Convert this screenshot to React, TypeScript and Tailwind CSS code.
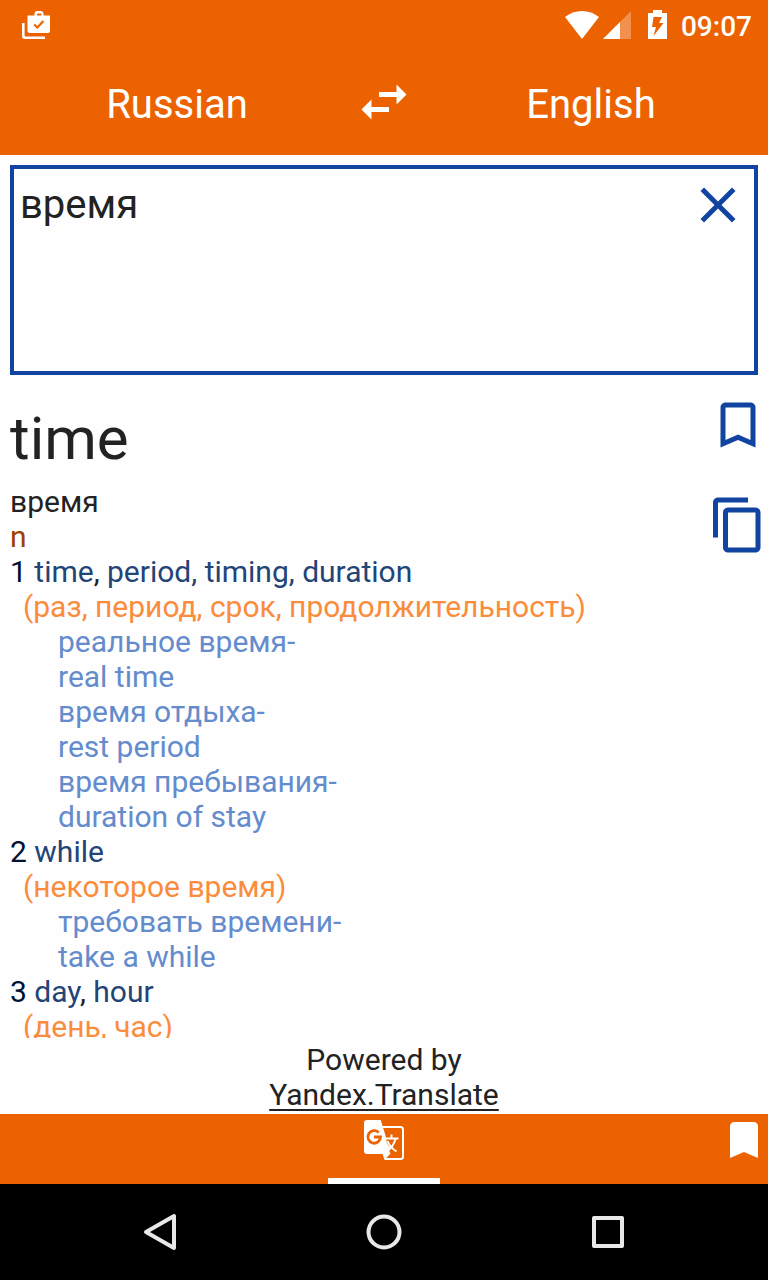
import { useState } from "react";
import type { ReactNode } from "react";
import {
  MdBookmark,
  MdBookmarkBorder,
  MdClose,
  MdContentCopy,
  MdSwapHoriz,
} from "react-icons/md";

type Term = { word: string; separator?: string; tinted?: boolean };
type Sense = { terms: Term[]; hint: string; examples: string[] };

const senses: Sense[] = [
  {
    terms: [
      { word: "time", separator: ", " },
      { word: "period", separator: ", ", tinted: true },
      { word: "timing", separator: ", ", tinted: true },
      { word: "duration" },
    ],
    hint: "(раз, период, срок, продолжительность)",
    examples: [
      "реальное время-",
      "real time",
      "время отдыха-",
      "rest period",
      "время пребывания-",
      "duration of stay",
    ],
  },
  {
    terms: [{ word: "while" }],
    hint: "(некоторое время)",
    examples: ["требовать времени-", "take a while"],
  },
  {
    terms: [{ word: "day", separator: ", " }, { word: "hour" }],
    hint: "(день, час)",
    examples: [],
  },
];

function StatusBar() {
  return (
    <div className="flex h-12 items-center justify-between pl-[22px] pr-4 pt-px">
      <svg width="28" height="28" viewBox="0 0 28 28" aria-hidden="true">
        <path
          fill="#fff"
          fillRule="evenodd"
          d="M12.500 4.500V3a3 3 0 0 1 3-3h3a3 3 0 0 1 3 3v1.500H28V20a2 2 0 0 1-2 2H7.500a2 2 0 0 1-2-2V4.500zM15 4.500h4.500v-1a1 1 0 0 0-1-1H16a1 1 0 0 0-1 1z"
        />
        <path d="M12.200 13.500l3.200 3 6-6.500" fill="none" stroke="#ec6200" strokeWidth="2.200" />
        <path d="M1.300 12v12.700a2 2 0 0 0 2 2H23" fill="none" stroke="#fff" strokeWidth="2.600" />
      </svg>
      <div className="flex items-center">
        <svg width="34" height="28" viewBox="0 0 34 28" aria-hidden="true">
          <path fill="#fff" d="M17 28L0 6Q7.500 0 17 0t17 6z" />
        </svg>
        <svg className="ml-1" width="28" height="28" viewBox="0 0 28 28" aria-hidden="true">
          <path fill="#fff" fillOpacity=".3" d="M0 28L28 0v28z" />
          <path fill="#fff" d="M0 28L17 11v17z" />
        </svg>
        <svg className="ml-[17px]" width="19" height="29" viewBox="0 0 19 29" aria-hidden="true">
          <path
            fill="#fff"
            fillRule="evenodd"
            d="M5 0h9v3h5v26H0V3h5zM5.500 7L4 17h4l-2.500 9L15.500 13h-4.500l3-6z"
          />
        </svg>
        <span className="ml-[14px] pt-1 text-[28px] font-medium leading-8 text-white">09:07</span>
      </div>
    </div>
  );
}

function TranslateIcon() {
  return (
    <svg width="40" height="40" viewBox="0 0 40 40" fill="none" aria-hidden="true">
      <path
        d="M18 7h18.500a2.500 2.500 0 0 1 2.500 2.500v27a2.500 2.500 0 0 1-2.500 2.500H21"
        stroke="#fff"
        strokeWidth="2"
      />
      <path
        fill="#fff"
        d="M3 0h13.700l4.800 15.500 1.500 8 3.500 4.500-2 1.500 2 4L20.500 40l-2-6H3a3 3 0 0 1-3-3V3a3 3 0 0 1 3-3z"
      />
      <path
        d="M14.600 12.400A6.300 6.300 0 1 0 16.500 17H10"
        stroke="#ec6200"
        strokeWidth="2.800"
      />
      <path
        d="M21 18.500h13.500M27.500 14.500v4M31.500 19c-1.300 5-4.500 9.500-9 12.500M23.500 21c1.800 4.500 5 8 9 10.500"
        stroke="#fff"
        strokeWidth="2"
      />
    </svg>
  );
}

function IconButton({ label, onClick, children }: { label: string; onClick?: () => void; children: ReactNode }) {
  return (
    <button type="button" aria-label={label} onClick={onClick} className="shrink-0 text-[#1144a0]">
      {children}
    </button>
  );
}

export default function App() {
  const [query, setQuery] = useState("время");
  const [saved, setSaved] = useState(false);

  return (
    <div className="flex h-screen flex-col bg-[#fefefe] font-[Roboto,sans-serif] text-[#222222]">
      <header className="shrink-0 bg-[#ec6200] text-white">
        <StatusBar />
        <div className="flex h-[107px] items-center text-[40px] leading-[48px]">
          <button type="button" className="flex-1 pt-[6px]">Russian</button>
          <button type="button" aria-label="Swap languages">
            <MdSwapHoriz size={60} />
          </button>
          <button type="button" className="flex-1 pt-[6px]">English</button>
        </div>
      </header>

      <div className="mx-[10px] mt-[10px] flex h-[210px] shrink-0 items-start border-4 border-[#1144a0] pr-[6px] pt-[6px]">
        <textarea
          aria-label="Text to translate"
          spellCheck={false}
          value={query}
          onChange={(e) => setQuery(e.target.value)}
          className="h-full min-w-0 flex-1 resize-none bg-transparent pl-[6px] pt-[6px] text-[40px] leading-[48px] outline-none"
        />
        <IconButton label="Clear text" onClick={() => setQuery("")}>
          <MdClose size={60} />
        </IconButton>
      </div>

      <main className="flex min-h-0 flex-1 items-start overflow-hidden pl-[10px] pt-5">
        <article className="h-full min-w-0 flex-1 overflow-hidden pt-2 text-[30px] leading-[35px]">
          <h1 className="mb-[9px] text-[60px] leading-[72px]">time</h1>
          <p>время</p>
          <p className="text-[#a04000]">n</p>
          <ol>
            {senses.map((sense, i) => (
              <li key={i}>
                <p>
                  <span className="text-[#001133]">{i + 1} </span>
                  {sense.terms.map((term) => (
                    <span key={term.word} className={term.tinted ? "text-[#224477]" : ""}>
                      <span className="text-[#224477]">{term.word}</span>
                      {term.separator}
                    </span>
                  ))}
                </p>
                <p className="pl-[13px] text-[#fa8c3c]">{sense.hint}</p>
                {sense.examples.map((example) => (
                  <p key={example} className="pl-12 text-[#648ccd]">{example}</p>
                ))}
              </li>
            ))}
          </ol>
        </article>
        <div className="flex shrink-0 flex-col gap-10">
          <IconButton label="Save translation" onClick={() => setSaved(!saved)}>
            {saved ? <MdBookmark size={60} /> : <MdBookmarkBorder size={60} />}
          </IconButton>
          <IconButton label="Copy translation">
            <MdContentCopy size={60} />
          </IconButton>
        </div>
      </main>

      <footer className="shrink-0">
        <p className="pb-[2px] pt-1 text-center text-[30px] leading-[35px]">
          Powered by
          <br />
          <a href="#yandex" className="underline decoration-2 underline-offset-4">Yandex.Translate</a>
        </p>
        <nav className="grid h-[70px] grid-cols-[1fr_112px_1fr] bg-[#ec6200] text-white" aria-label="Sections">
          <button
            type="button"
            aria-label="Translate"
            className="col-start-2 flex items-start justify-center border-b-[6px] border-white pt-[6px]"
          >
            <TranslateIcon />
          </button>
          <button type="button" aria-label="Saved" className="flex items-start justify-end pt-[2px]">
            <MdBookmark size={48} />
          </button>
        </nav>
        <nav className="flex h-24 items-center justify-center gap-44 bg-black" aria-label="System">
          <button type="button" aria-label="Back">
            <svg width="48" height="48" viewBox="0 0 48 48" fill="none" stroke="#e8e8e8" strokeWidth="4" strokeLinejoin="round">
              <path d="M38 8v32L10 24z" />
            </svg>
          </button>
          <button type="button" aria-label="Home">
            <svg width="48" height="48" viewBox="0 0 48 48" fill="none" stroke="#e8e8e8" strokeWidth="4">
              <circle cx="24" cy="24" r="15.500" />
            </svg>
          </button>
          <button type="button" aria-label="Recent apps">
            <svg width="48" height="48" viewBox="0 0 48 48" fill="none" stroke="#e8e8e8" strokeWidth="4" strokeLinejoin="round">
              <path d="M10 10h28v28H10z" />
            </svg>
          </button>
        </nav>
      </footer>
    </div>
  );
}
